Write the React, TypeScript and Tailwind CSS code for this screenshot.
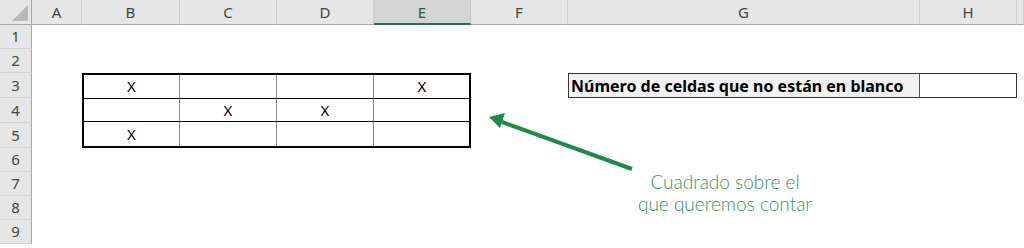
import React from "react";

const cols = ["A", "B", "C", "D", "E", "F", "G", "H", ""];
const rows = [1, 2, 3, 4, 5, 6, 7, 8, 9];

const tableData = [
  ["X", "", "", "X"],
  ["", "X", "X", ""],
  ["X", "", "", ""],
];

export default function App() {
  return (
    <div className="relative w-[1024px] h-[248px] overflow-hidden bg-white" style={{ fontFamily: '"Noto Sans", "Open Sans", sans-serif' }}>
      <div className="grid grid-cols-[32px_50px_98px_97px_97px_97px_97px_352px_97px_7px] grid-rows-[25px_24px_24px_25px_25px_25px_24px_24px_24px_24px]">
        {/* corner */}
        <div className="bg-[#e6e6e6] border-r border-b border-[#a6a6a6] flex items-end justify-end p-[3px]">
          <svg width="16" height="16" viewBox="0 0 16 16">
            <polygon points="16,0 16,16 0,16" fill="#b9b9b9" />
          </svg>
        </div>
        {cols.map((c, i) =>
          c === "E" ? (
            <div key={i} className="bg-[#d4d4d4] border-b-2 border-[#217346] border-r border-r-[#c6c6c6] flex items-center justify-center text-[15px] text-[#2d5a3c] pt-[2px]">
              {c}
            </div>
          ) : (
            <div key={i} className="bg-[#e6e6e6] border-b border-[#a6a6a6] border-r border-r-[#d0d0d0] flex items-center justify-center text-[15px] text-[#444] pt-[1px]">
              {c}
            </div>
          )
        )}
        {rows.map((r) => (
          <div
            key={r}
            className="bg-[#e6e6e6] border-r border-[#a6a6a6] border-b border-b-[#d4d4d4] flex items-center justify-center text-[15px] text-[#444]"
            style={{ gridColumnStart: 1, gridRowStart: r + 1 }}
          >
            {r}
          </div>
        ))}

        {/* Table B3:E5 */}
        <div className="col-start-3 col-span-4 row-start-4 row-span-3 border-2 border-black grid grid-cols-[96px_97px_97px_96px] grid-rows-3 text-[15px] text-black">
          {tableData.map((row, ri) =>
            row.map((v, ci) => (
              <div
                key={`${ri}-${ci}`}
                className={`flex items-center justify-center ${ri < 2 ? "border-b border-black" : ""} ${ci < 3 ? "border-r border-r-[#8a8a8a]" : ""}`}
              >
                {v}
              </div>
            ))
          )}
        </div>

        {/* G3:H3 */}
        <div className="col-start-8 row-start-4 border border-[#333] border-r-[#555] bg-[#f2f2f2] flex items-center pl-[2px] text-[16px] font-bold text-black leading-none">
          Número de celdas que no están en blanco
        </div>
        <div className="col-start-9 row-start-4 border border-l-0 border-[#333] bg-white" />
      </div>

      {/* Arrow annotation */}
      <svg className="absolute left-0 top-0 pointer-events-none" width="1024" height="248">
        <line x1="632" y1="169" x2="502" y2="122" stroke="#1c8b47" strokeWidth="4" />
        <polygon points="489,117 505,113 500,128" fill="#1c8b47" />
      </svg>
      <div
        className="absolute left-[615px] top-[171px] w-[220px] text-center text-[19px] leading-[22px] text-[#3a9462] font-light"
        style={{ fontFamily: 'Lato, "Open Sans", sans-serif' }}
      >
        Cuadrado sobre el
        <br />
        que queremos contar
      </div>
    </div>
  );
}
